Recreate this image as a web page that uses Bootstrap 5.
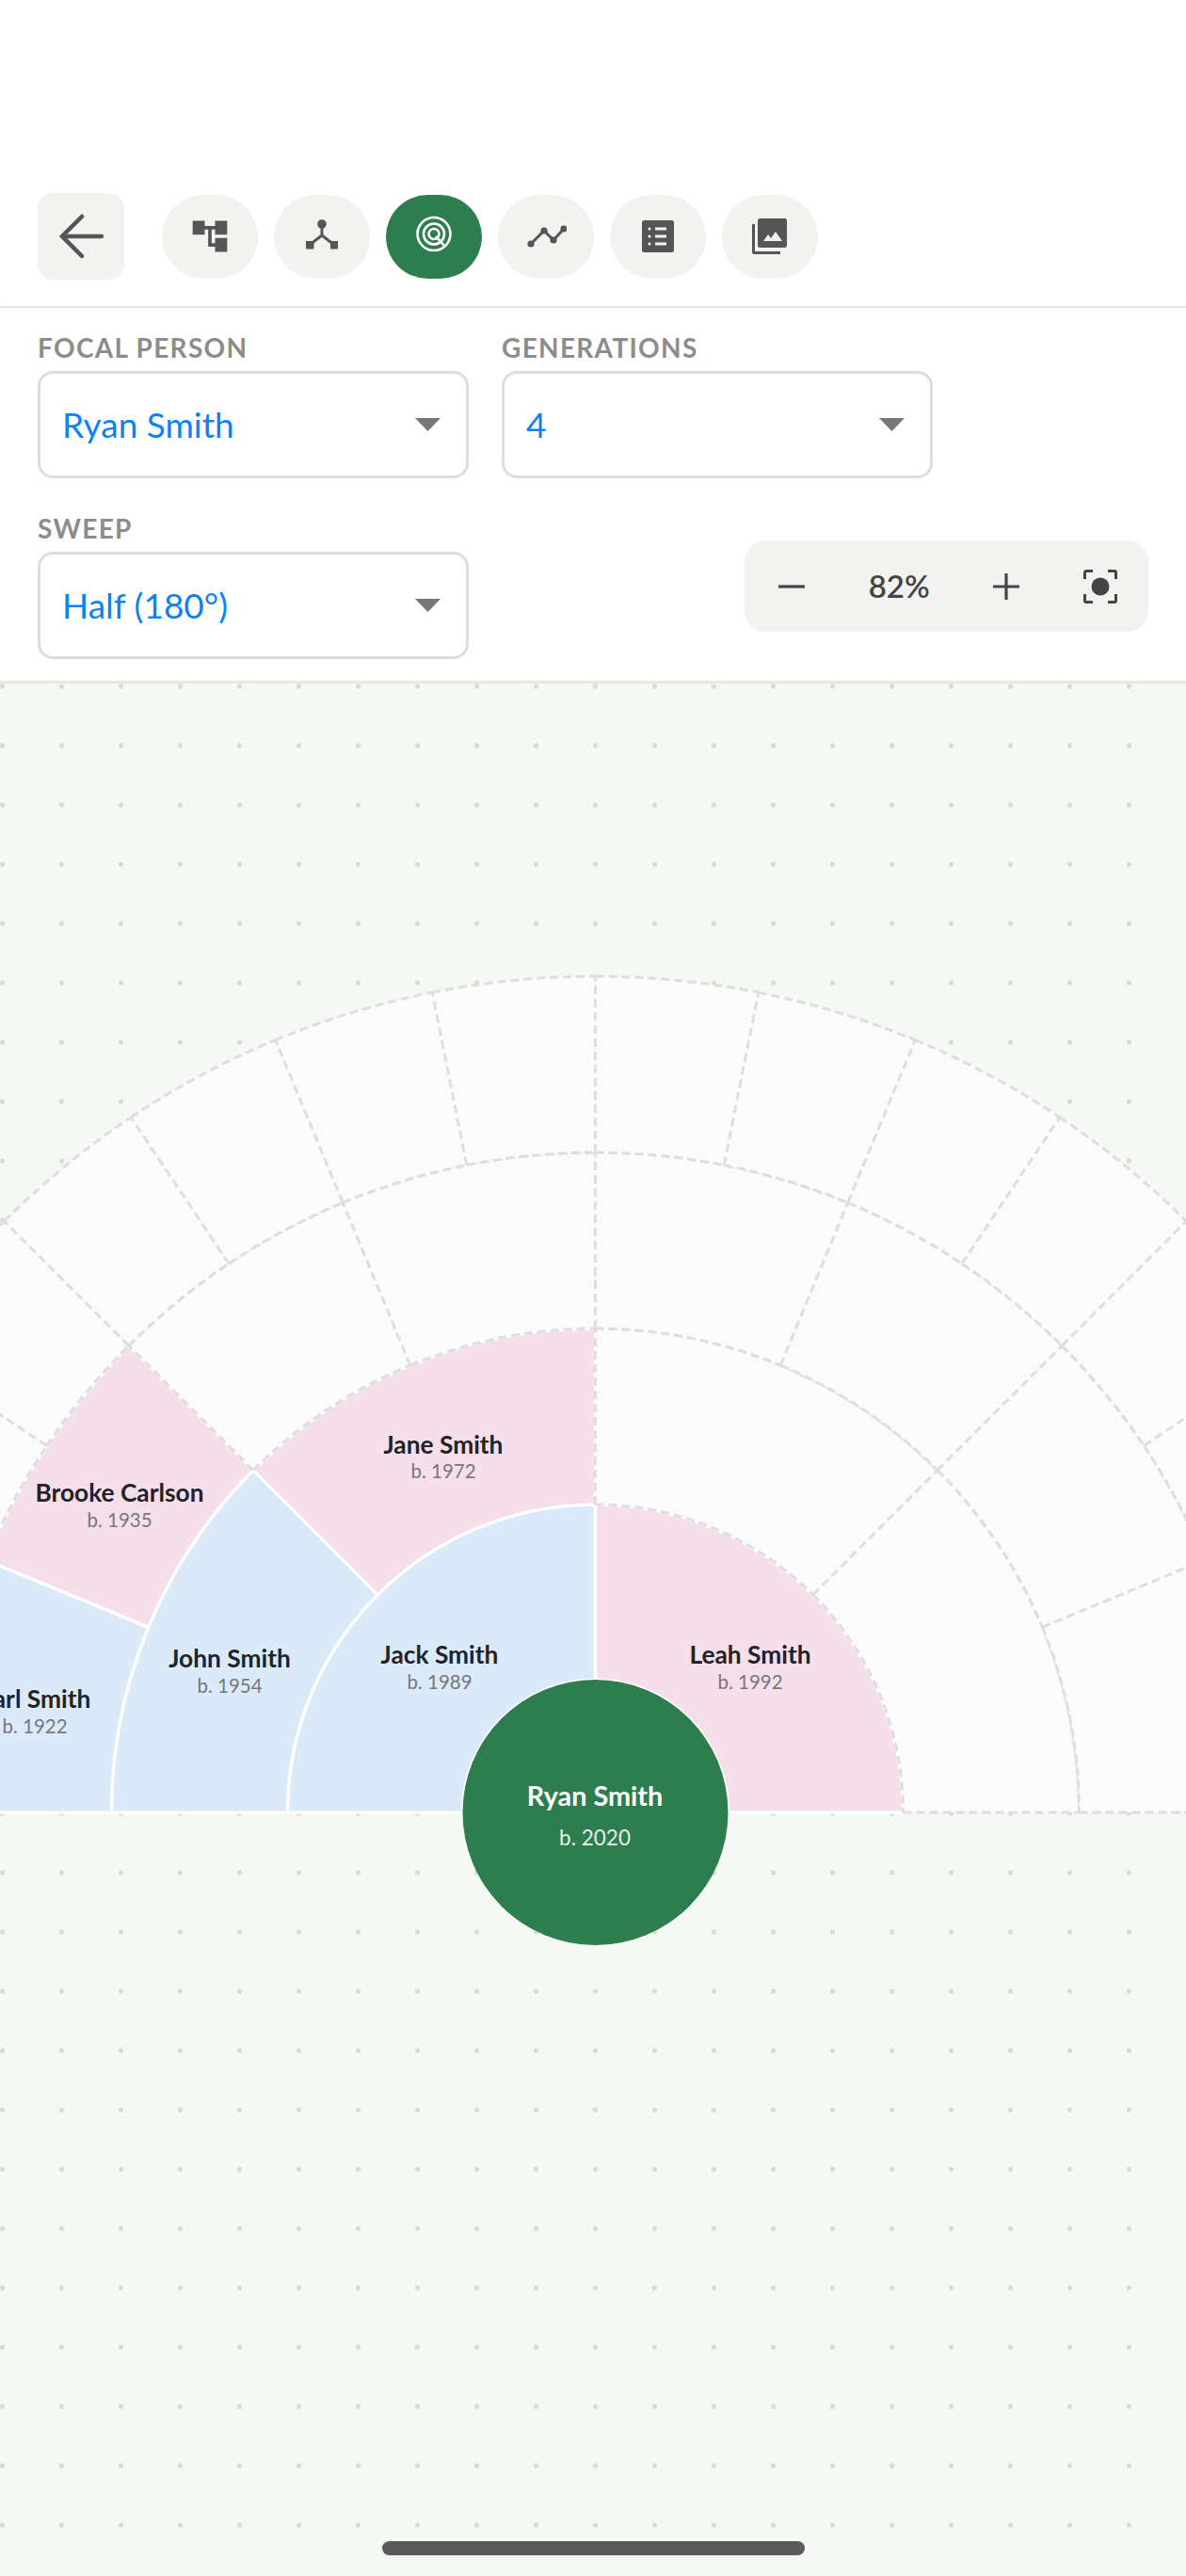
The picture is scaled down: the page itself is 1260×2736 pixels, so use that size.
<!DOCTYPE html>
<html lang="en">
<head>
  <meta charset="UTF-8" />
  <meta name="viewport" content="width=device-width, initial-scale=1" />
  <title>Fan chart</title>
  <link href="https://cdn.jsdelivr.net/npm/bootstrap@5.3.0/dist/css/bootstrap.min.css" rel="stylesheet" />
  <style>
    html, body { height: 2736px; }
    body {
      font-family: Lato, "Noto Sans", sans-serif;
      background: #fff;
      overflow: hidden;
    }
    .app-shell { height: 2736px; }
    .tool-row {
      padding: 205px 0 28px 40px;
      border-bottom: 2px solid #e6e8e3;
      box-shadow: 0 2px 6px rgba(0,0,0,.04);
      position: relative;
    }
    .back-btn {
      width: 92px;
      height: 92px;
      background: #f2f3f0;
      border: 0;
      border-radius: 16px;
      margin-right: 40px;
      padding: 0;
    }
    .view-pills { gap: 17px; }
    .view-pill {
      width: 102px;
      height: 89px;
      background: #f2f3f0;
      border: 0;
      padding: 0;
    }
    .view-pill.is-active { background: #2e7d4f; }
    .view-pill svg, .back-btn svg { display: block; margin: auto; }

    .ctl-panel {
      padding: 25px 40px 20px 40px;
      height: 399px;
      border-bottom: 3px solid #e6e8e3;
    }
    .ctl-row { gap: 35px; }
    .ctl-row + .ctl-row { margin-top: 36px; }
    .ctl-field { width: 458px; }
    .ctl-label {
      display: block;
      font-size: 28px;
      line-height: 34px;
      font-weight: 700;
      color: #8c8c8a;
      margin-bottom: 8px;
      letter-spacing: 1.300px;
    }
    .fan-select {
      height: 114px;
      border: 3px solid #dcdfd8;
      border-radius: 16px;
      font-size: 37px;
      color: #0a84f0;
      padding: 0 60px 0 23px;
      background-image: url("data:image/svg+xml,%3Csvg xmlns='http://www.w3.org/2000/svg' width='27' height='14'%3E%3Cpath d='M0 0h27L13.5 14z' fill='%23777'/%3E%3C/svg%3E");
      background-size: 27px 14px;
      background-position: right 27px center;
    }
    .zoom-box {
      width: 429px;
      height: 97px;
      background: #f2f3f0;
      border-radius: 22px;
      padding: 0 33px 0 36px;
      margin-left: auto;
      margin-top: 30px;
      color: #444;
      font-size: 33px;
      font-weight: 600;
    }

    .fan-canvas {
      flex: 1 1 auto;
      position: relative;
      background-color: #f6f8f5;
      background-image: radial-gradient(circle, #d9dcd5 2.400px, transparent 3px);
      background-size: 63px 63px;
      background-position: -29px -28.500px;
    }
    .fan-canvas svg { display: block; width: 100%; height: 100%; }
    .who { font-size: 26.300px; font-weight: 700; fill: #222228; text-anchor: middle; }
    .born { font-size: 20.500px; fill: #77777c; text-anchor: middle; }
    .who-root { font-size: 28.800px; font-weight: 700; fill: #fff; text-anchor: middle; }
    .born-root { font-size: 22.500px; fill: #e3efe8; text-anchor: middle; }
    .home-bar {
      position: absolute;
      left: 406px;
      bottom: 22px;
      width: 449px;
      height: 15px;
      border-radius: 8px;
      background: #5a5a5a;
    }
  </style>
</head>
<body>
<div class="app-shell d-flex flex-column">

  <div class="tool-row d-flex align-items-center">
    <button class="back-btn" type="button" aria-label="Back">
      <svg width="92" height="92" viewBox="0 0 92 92" fill="none" stroke="#555" stroke-width="4.500" stroke-linecap="round" stroke-linejoin="miter">
        <path d="M26 46h42M47 25L26 46l21 21" />
      </svg>
    </button>
    <div class="view-pills d-flex">
      <button class="view-pill rounded-pill" type="button" aria-label="Tree">
        <svg width="44" height="44" viewBox="0 0 24 24" fill="#555"><path d="M22 11V3h-7v3H9V3H2v8h7V8h2v10h4v3h7v-8h-7v3h-2V8h2v3z" /></svg>
      </button>
      <button class="view-pill rounded-pill" type="button" aria-label="Network">
        <svg width="44" height="44" viewBox="0 0 44 44" fill="#555">
          <circle cx="22" cy="9" r="4.800" />
          <rect x="5" y="27" width="8.500" height="8.500" />
          <rect x="31" y="27" width="8" height="8.500" />
          <path d="M22 12v9M9 31l13-10 13 10" fill="none" stroke="#555" stroke-width="3" />
        </svg>
      </button>
      <button class="view-pill rounded-pill is-active" type="button" aria-label="Fan">
        <svg width="44" height="44" viewBox="0 0 44 44" fill="none" stroke="#fff" stroke-width="2.600">
          <circle cx="22" cy="19.500" r="17.500" />
          <circle cx="22" cy="19.500" r="11" />
          <circle cx="22" cy="19.500" r="5.500" />
          <path d="M24 22l9 10" />
        </svg>
      </button>
      <button class="view-pill rounded-pill" type="button" aria-label="Timeline">
        <svg width="44" height="44" viewBox="0 0 44 44" fill="#555">
          <path d="M6 30l14-14 10 10 11-12" fill="none" stroke="#555" stroke-width="3" />
          <circle cx="6" cy="30" r="3.600" /><circle cx="20" cy="16" r="3.600" /><circle cx="30" cy="26" r="3.600" /><circle cx="41" cy="14" r="3.600" />
        </svg>
      </button>
      <button class="view-pill rounded-pill" type="button" aria-label="List">
        <svg width="44" height="44" viewBox="0 0 44 44">
          <rect x="5" y="5" width="34" height="34" rx="2.500" fill="#555" />
          <g fill="#f2f3f0">
            <circle cx="13" cy="14" r="1.600" /><circle cx="13" cy="22" r="1.600" /><circle cx="13" cy="30" r="1.600" />
            <rect x="19" y="12.500" width="12" height="3" /><rect x="19" y="20.500" width="12" height="3" /><rect x="19" y="28.500" width="12" height="3" />
          </g>
        </svg>
      </button>
      <button class="view-pill rounded-pill" type="button" aria-label="Gallery">
        <svg width="44" height="44" viewBox="0 0 44 44">
          <path d="M3 9h3v29h27v3H5a2 2 0 0 1-2-2z" fill="#555" />
          <rect x="9" y="3" width="31" height="31" rx="2.500" fill="#555" />
          <path d="M15 27l5-7 3 4 5-7 7 10z" fill="#f2f3f0" />
        </svg>
      </button>
    </div>
  </div>

  <div class="ctl-panel">
    <div class="ctl-row d-flex">
      <div class="ctl-field">
        <label class="ctl-label" for="focal">FOCAL PERSON</label>
        <select class="form-select fan-select" id="focal"><option>Ryan Smith</option></select>
      </div>
      <div class="ctl-field">
        <label class="ctl-label" for="gens">GENERATIONS</label>
        <select class="form-select fan-select" id="gens"><option>4</option></select>
      </div>
    </div>
    <div class="ctl-row d-flex align-items-start">
      <div class="ctl-field">
        <label class="ctl-label" for="sweep">SWEEP</label>
        <select class="form-select fan-select" id="sweep"><option>Half (180°)</option></select>
      </div>
      <div class="zoom-box d-flex align-items-center justify-content-between">
        <svg width="28" height="28" viewBox="0 0 28 28"><path d="M0 14h28" stroke="#444" stroke-width="3.200" /></svg>
        <span>82%</span>
        <svg width="28" height="28" viewBox="0 0 28 28"><path d="M0 14h28M14 0v28" stroke="#444" stroke-width="3.200" /></svg>
        <svg width="36" height="36" viewBox="0 0 36 36" fill="none" stroke="#444" stroke-width="3">
          <path d="M1.500 10V3a1.500 1.500 0 0 1 1.500-1.500h7M26 1.500h7a1.500 1.500 0 0 1 1.500 1.500v7M34.500 26v7a1.500 1.500 0 0 1-1.500 1.500h-7M10 34.500H3A1.500 1.500 0 0 1 1.500 33v-7" />
          <circle cx="18" cy="18" r="9.500" fill="#444" stroke="none" />
        </svg>
      </div>
    </div>
  </div>

  <div class="fan-canvas">
    <svg id="fan" viewBox="0 726 1260 2010" preserveAspectRatio="none" xmlns="http://www.w3.org/2000/svg">
      <g id="sectors"></g>
      <text class="who" x="471" y="1544">Jane Smith</text>
      <text class="born" x="471" y="1570">b. 1972</text>
      <text class="who" x="127" y="1595">Brooke Carlson</text>
      <text class="born" x="127" y="1622">b. 1935</text>
      <text class="who" x="244" y="1771">John Smith</text>
      <text class="born" x="244" y="1798">b. 1954</text>
      <text class="who" x="467" y="1767">Jack Smith</text>
      <text class="born" x="467" y="1794">b. 1989</text>
      <text class="who" x="37" y="1814">Earl Smith</text>
      <text class="born" x="37" y="1841">b. 1922</text>
      <text class="who" x="797" y="1767">Leah Smith</text>
      <text class="born" x="797" y="1794">b. 1992</text>
      <circle cx="632.500" cy="1925" r="141" fill="#2e7d4f" />
      <text class="who-root" x="632" y="1918">Ryan Smith</text>
      <text class="born-root" x="632" y="1960">b. 2020</text>
    </svg>
    <div class="home-bar"></div>
  </div>
</div>

<script src="https://cdn.jsdelivr.net/npm/bootstrap@5.3.0/dist/js/bootstrap.bundle.min.js"></script>
<script>
  // Rings of the half fan, inside out. Slots left to right, filled ones by index.
  const cx = 632.5, cy = 1925;
  const SVG_NS = 'http://www.w3.org/2000/svg';
  const rings = [
    { r0: 141, r1: 327, slots: 2,  filled: { 0: '#dbeaf9', 1: '#f5dfeb' } },
    { r0: 327, r1: 514, slots: 4,  filled: { 0: '#dbeaf9', 1: '#f5dfeb' } },
    { r0: 514, r1: 701, slots: 8,  filled: { 0: '#dbeaf9', 1: '#f5dfeb' } },
    { r0: 701, r1: 888, slots: 16, filled: {} }
  ];
  const group = document.getElementById('sectors');

  function pt(r, a) {
    return (cx + r * Math.cos(a)).toFixed(2) + ' ' + (cy - r * Math.sin(a)).toFixed(2);
  }

  function sector(r0, r1, a0, a1) {
    return 'M' + pt(r0, a0) + 'L' + pt(r1, a0) +
      'A' + r1 + ' ' + r1 + ' 0 0 1 ' + pt(r1, a1) +
      'L' + pt(r0, a1) +
      'A' + r0 + ' ' + r0 + ' 0 0 0 ' + pt(r0, a0) + 'Z';
  }

  function add(d, attrs) {
    const p = document.createElementNS(SVG_NS, 'path');
    p.setAttribute('d', d);
    Object.keys(attrs).forEach(k => p.setAttribute(k, attrs[k]));
    group.appendChild(p);
  }

  const dashed = { fill: 'none', stroke: '#dedede', 'stroke-width': '3', 'stroke-dasharray': '9 5' };

  rings.forEach(ring => {
    const step = Math.PI / ring.slots;
    const lines = [];
    for (let i = 0; i < ring.slots; i++) {
      const a0 = Math.PI - i * step, a1 = a0 - step;
      if (ring.filled[i]) {
        add(sector(ring.r0, ring.r1, a0, a1), { fill: ring.filled[i], stroke: '#fff', 'stroke-width': '3.2' });
        continue;
      }
      add(sector(ring.r0, ring.r1, a0, a1), { fill: '#fbfbfb' });
      // arcs per slot, shared radial edges only once so their dashes stay clean
      lines.push('M' + pt(ring.r1, a0) + 'A' + ring.r1 + ' ' + ring.r1 + ' 0 0 1 ' + pt(ring.r1, a1));
      lines.push('M' + pt(ring.r0, a0) + 'A' + ring.r0 + ' ' + ring.r0 + ' 0 0 1 ' + pt(ring.r0, a1));
      if (i === 0 || ring.filled[i - 1]) lines.push('M' + pt(ring.r0, a0) + 'L' + pt(ring.r1, a0));
      lines.push('M' + pt(ring.r0, a1) + 'L' + pt(ring.r1, a1));
    }
    lines.forEach(d => add(d, dashed));
  });
</script>
</body>
</html>
